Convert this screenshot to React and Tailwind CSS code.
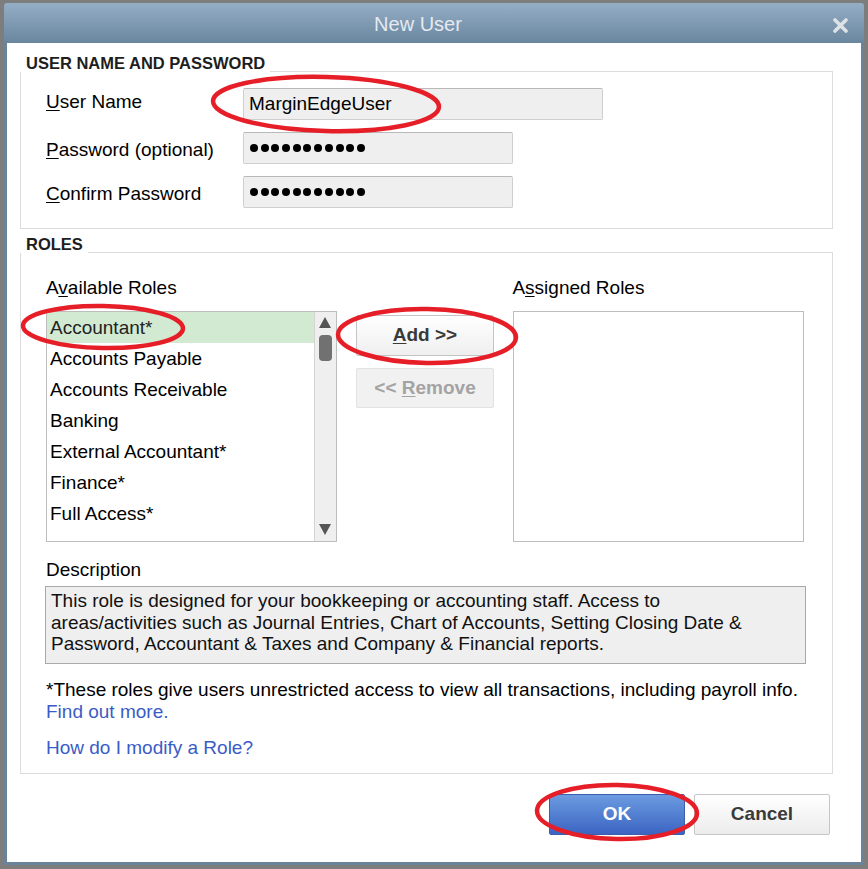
import React from "react";

const font = { fontFamily: '"Liberation Sans", Arial, sans-serif' };

const roles = [
  "Accountant*",
  "Accounts Payable",
  "Accounts Receivable",
  "Banking",
  "External Accountant*",
  "Finance*",
  "Full Access*",
];

function Dots() {
  return (
    <div className="flex items-center gap-[2.7px] pl-[6px]">
      {Array.from({ length: 11 }, (_, i) => (
        <span key={i} className="w-[8px] h-[8px] rounded-full bg-black" />
      ))}
    </div>
  );
}

function Field({ u, rest, wide, first, children }) {
  return (
    <div className="flex items-center">
      <div className={`w-[197px] text-[19px] text-black leading-[22px] ${first ? "-mt-[4px]" : "mt-[3px]"}`}>
        <span className="underline underline-offset-2">{u}</span>
        {rest}
      </div>
      <div
        className={`${wide ? "w-[360px]" : "w-[270px]"} h-[32px] flex items-center bg-[#efefef] border border-[#cfcfcf] border-t-[#b9b9b9] rounded-[2px]`}
      >
        {children}
      </div>
    </div>
  );
}

function Legend({ children }) {
  return (
    <div className="relative z-10 w-fit bg-white pl-[6px] pr-[5px] h-[17px] leading-[17px] text-[16.5px] font-bold text-[#1e1e1e] -mb-[1px]">
      {children}
    </div>
  );
}

export default function App() {
  return (
    <div style={font} className="relative w-[868px] h-[869px] bg-[#7d7d7d] pt-[3px] px-[4px] pb-[4px]">
      <div className="h-full flex flex-col bg-[#6b8399] rounded-t-[3px] px-[3px] pb-[3px]">
        {/* Title bar */}
        <div className="relative h-[40px] shrink-0 flex items-center justify-center bg-gradient-to-b from-[#94aec5] to-[#6a869f] -mx-[3px] rounded-t-[3px] pr-[32px]">
          <span className="text-[20px] text-[#e4eaf0] pt-[2px]">New User</span>
          <svg className="absolute right-[16px] top-[15px]" width="15" height="15" viewBox="0 0 15 15">
            <path d="M2 2 L13 13 M13 2 L2 13" stroke="#dde2e7" strokeWidth="3.6" strokeLinecap="round" />
          </svg>
        </div>

        {/* Body */}
        <div className="flex-1 bg-white flex flex-col pl-[13px] pr-[28px]">
          {/* User name and password */}
          <div className="mt-[12px]">
            <Legend>USER NAME AND PASSWORD</Legend>
            <div className="border border-[#dcdcdc] pl-[25px] pt-[16px] pb-[20px] flex flex-col gap-[12px]">
              <Field u="U" rest="ser Name" wide first>
                <span className="pl-[5px] text-[19px] text-black">MarginEdgeUser</span>
              </Field>
              <Field u="P" rest="assword (optional)">
                <Dots />
              </Field>
              <Field u="C" rest="onfirm Password">
                <Dots />
              </Field>
            </div>
          </div>

          {/* Roles */}
          <div className="mt-[7px]">
            <Legend>ROLES</Legend>
            <div className="border border-[#dcdcdc] pl-[25px] pr-[28px] pt-[24px] pb-[14px] text-[19px] text-black">
              <div className="flex gap-[19px]">
                {/* Available */}
                <div className="w-[291px] flex flex-col">
                  <div className="leading-[22px] h-[22px]">
                    A<span className="underline underline-offset-2">v</span>ailable Roles
                  </div>
                  <div className="mt-[12px] h-[231px] border border-[#bdbdbd] flex">
                    <div className="flex-1 flex flex-col">
                      {roles.map((r, i) => (
                        <div
                          key={r}
                          className={`h-[31px] leading-[31px] pl-[3px] ${i === 0 ? "bg-[#d3ead2] text-[#222]" : ""}`}
                        >
                          {r}
                        </div>
                      ))}
                    </div>
                    <div className="w-[22px] bg-[#efefef] border-l border-[#d4d4d4] flex flex-col items-center justify-between py-[3px]">
                      <div className="flex flex-col items-center">
                        <svg width="14" height="13" viewBox="0 0 14 13" className="mt-[1px]">
                          <path d="M7 1 L13 12 L1 12 Z" fill="#555" />
                        </svg>
                        <div className="mt-[6px] w-[13px] h-[26px] rounded-[4px] bg-[#717171]" />
                      </div>
                      <svg width="14" height="13" viewBox="0 0 14 13" className="mb-[2px]">
                        <path d="M1 1 L13 1 L7 12 Z" fill="#555" />
                      </svg>
                    </div>
                  </div>
                </div>

                {/* Buttons */}
                <div className="w-[139px] pt-[38px] flex flex-col gap-[12px]">
                  <button className="h-[41px] rounded-[2px] border border-[#c4c4c4] bg-gradient-to-b from-[#ffffff] to-[#efefef] text-[19px] font-bold text-[#3a3a3a]">
                    <span className="underline underline-offset-2">A</span>dd &gt;&gt;
                  </button>
                  <button className="h-[40px] rounded-[2px] border border-[#e2e2e2] bg-[#f1f1f1] text-[19px] font-bold text-[#a3a3a3]">
                    &lt;&lt; <span className="underline underline-offset-2">R</span>emove
                  </button>
                </div>

                {/* Assigned */}
                <div className="w-[291px] flex flex-col">
                  <div className="leading-[22px] h-[22px] -ml-[1px]">
                    A<span className="underline underline-offset-2">s</span>signed Roles
                  </div>
                  <div className="mt-[12px] h-[231px] border border-[#bdbdbd]" />
                </div>
              </div>

              <div className="mt-[17px] leading-[22px]">Description</div>
              <div className="mt-[5px] -ml-[1px] w-[761px] h-[78px] bg-[#efefef] border border-[#a9a9a9] px-[5px] pt-[3px] leading-[21.5px] text-[#111]">
                This role is designed for your bookkeeping or accounting staff. Access to
                <br />
                areas/activities such as Journal Entries, Chart of Accounts, Setting Closing Date &amp;
                <br />
                Password, Accountant &amp; Taxes and Company &amp; Financial reports.
              </div>

              <div className="mt-[15px] leading-[22px] whitespace-nowrap">
                *These roles give users unrestricted access to view all transactions, including payroll info.
              </div>
              <div className="leading-[22px] text-[#3b5cc6]">Find out more.</div>
              <div className="mt-[14px] leading-[22px] text-[#3b5cc6]">How do I modify a Role?</div>
            </div>
          </div>

          {/* Footer buttons */}
          <div className="mt-[20px] flex justify-end gap-[9px] pr-[3px]">
            <button className="w-[136px] h-[41px] rounded-[2px] border border-[#3b5fae] bg-gradient-to-b from-[#6c9be0] to-[#3c64c2] text-[19px] font-bold text-white">
              OK
            </button>
            <button className="w-[136px] h-[41px] rounded-[2px] border border-[#c6c6c6] bg-gradient-to-b from-[#ffffff] to-[#ececec] text-[19px] font-bold text-[#3a3a3a]">
              Cancel
            </button>
          </div>
        </div>
      </div>

      {/* Red annotation ellipses */}
      <svg className="absolute inset-0 pointer-events-none" width="868" height="869" viewBox="0 0 868 869">
        <g fill="none" stroke="#e61e28" strokeWidth="4.5">
          <ellipse cx="326" cy="104" rx="113" ry="27" transform="rotate(1.5 326 104)" />
          <ellipse cx="103" cy="327" rx="80" ry="21" transform="rotate(1 103 327)" />
          <ellipse cx="427" cy="336" rx="89" ry="27" transform="rotate(1 427 336)" />
          <ellipse cx="617" cy="812" rx="80" ry="27" transform="rotate(1 617 812)" />
        </g>
      </svg>
    </div>
  );
}
